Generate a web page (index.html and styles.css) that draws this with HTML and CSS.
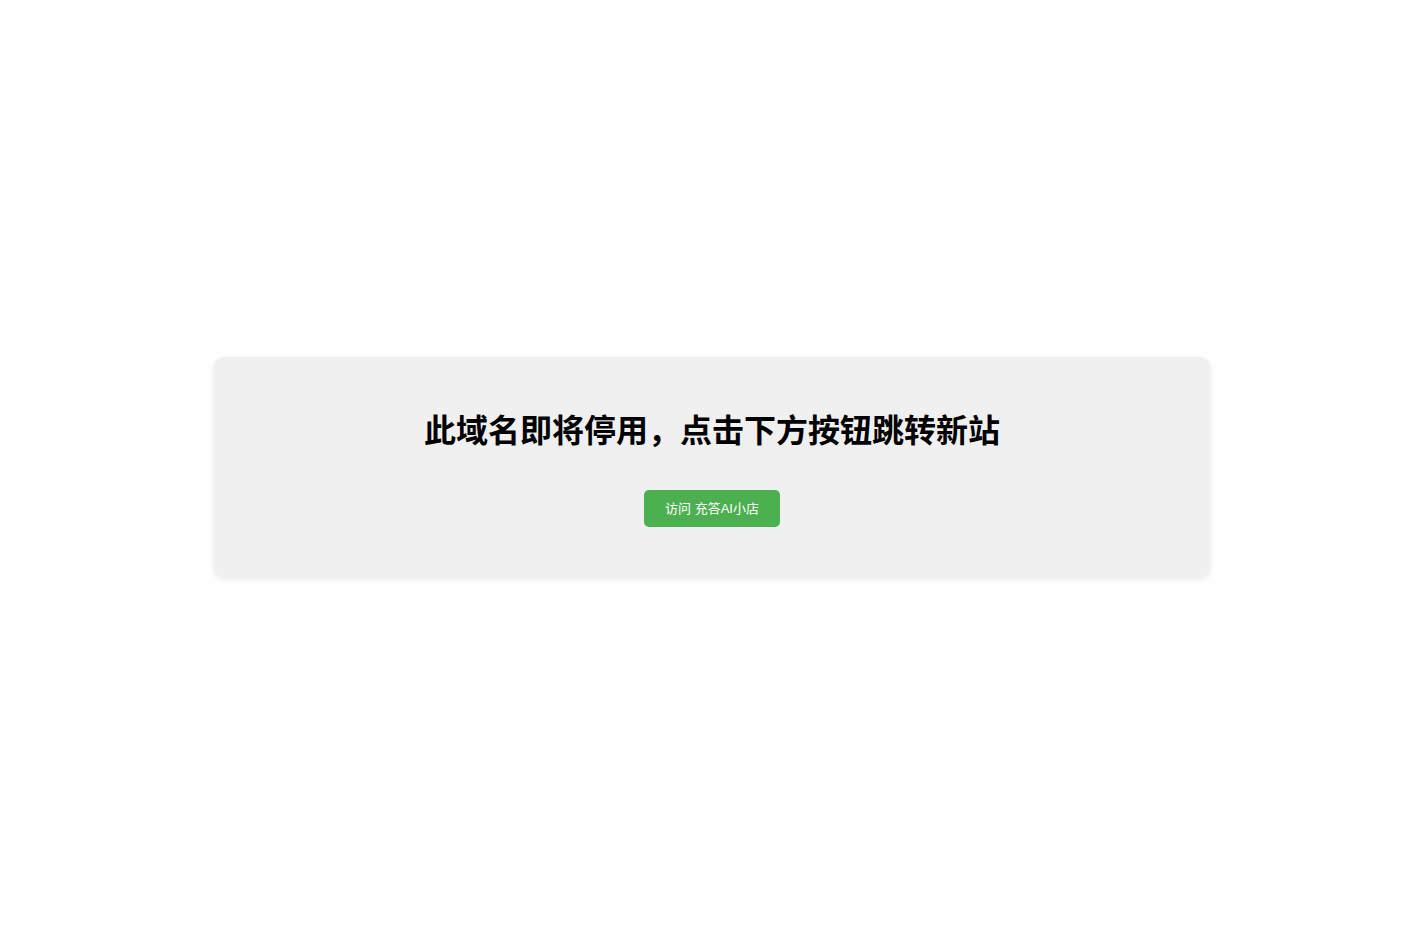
FILE: index.html
```html
<!DOCTYPE html>
<html lang="zh-CN">
<head>
    <meta charset="UTF-8">
    <meta name="viewport" content="width=device-width, initial-scale=1.0">
    <title>充答AI小店</title>
    <link rel="stylesheet" href="styles.css">
</head>
<body>
    <div class="container">
        <h1 class="title">此域名即将停用，点击下方按钮跳转新站</h1>
        <button class="button" type="button">访问 充答AI小店</button>
    </div>
</body>
</html>
```

FILE: styles.css
```css
body {
    display: flex;
    justify-content: center;
    align-items: center;
    min-height: 100vh;
    margin: 0;
    font-family: "Liberation Sans", "Noto Sans CJK SC", sans-serif;
    background-color: #fefefe;
}

.container {
    box-sizing: border-box;
    width: 70%;
    padding: 50px;
    text-align: center;
    background-color: #f0f0f0;
    border-radius: 10px;
    box-shadow: 0 2px 4px 1px rgba(0, 0, 0, 0.06);
}

.title {
    margin: 0 0 35px;
    font-size: 32px;
    line-height: 48px;
    color: #000;
}

.button {
    padding: 10px 21px;
    font-family: inherit;
    font-size: 13px;
    line-height: 17px;
    color: #fff;
    background-color: #4caf50;
    border: none;
    border-radius: 5px;
    cursor: pointer;
}

.button:hover {
    background-color: #45a049;
}
```
